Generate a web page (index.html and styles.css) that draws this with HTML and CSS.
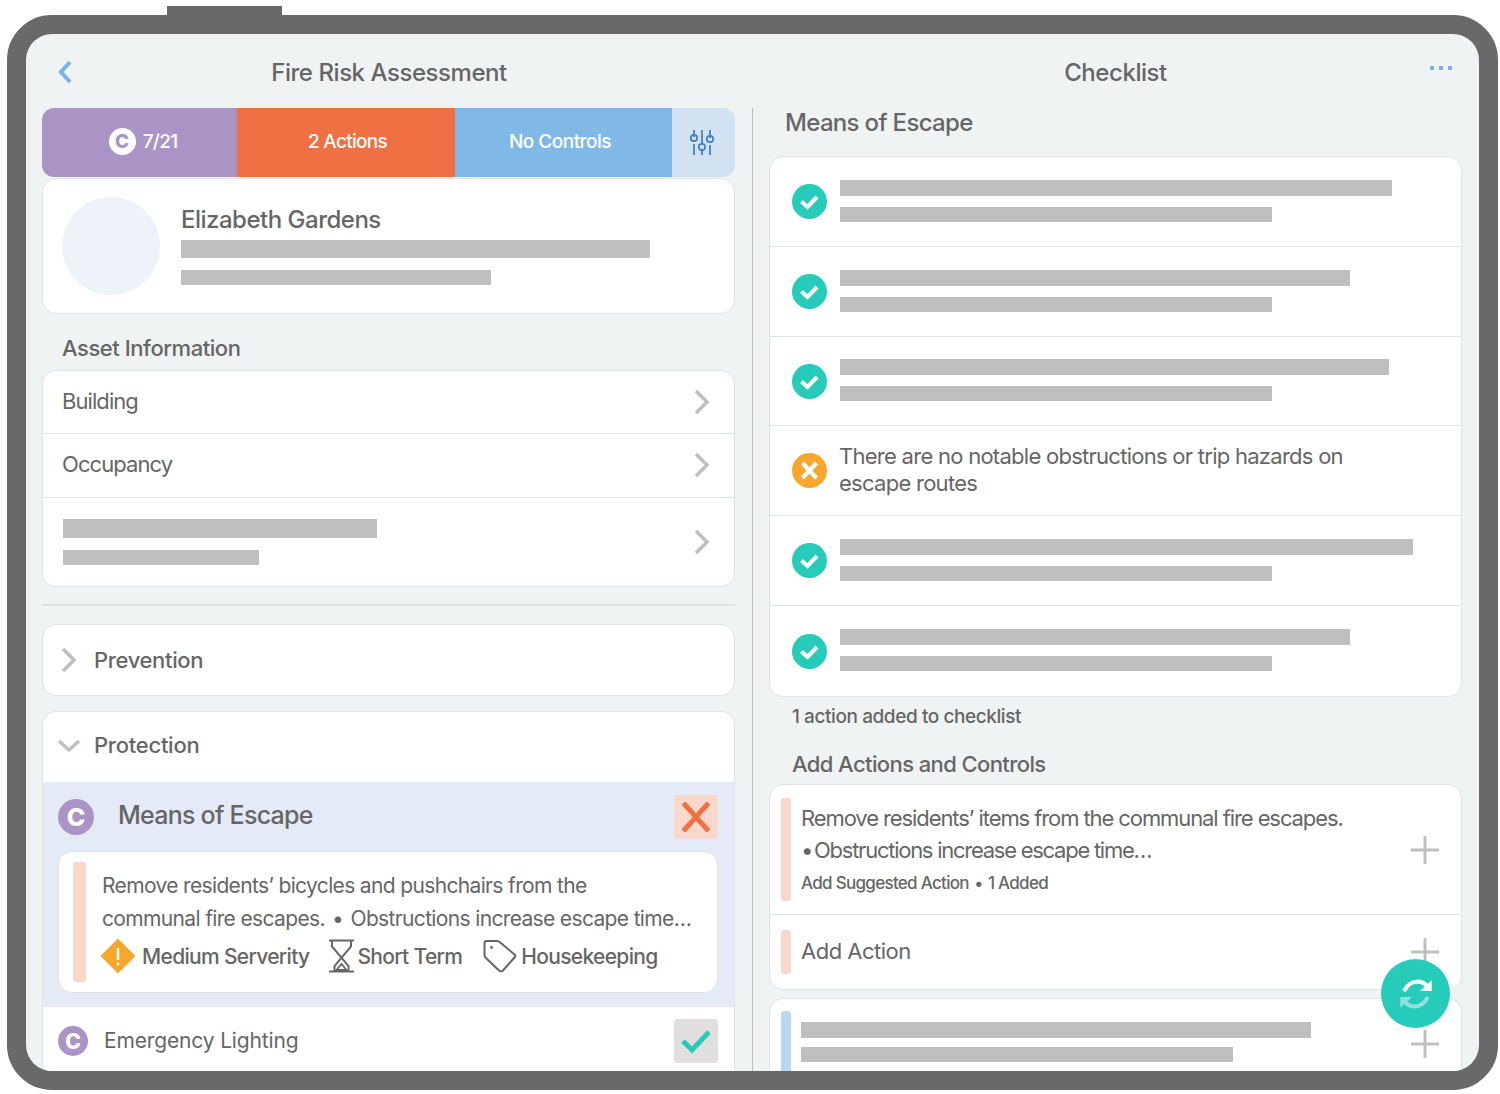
FILE: index.html
```html
<!DOCTYPE html>
<html lang="en">
<head>
<meta charset="utf-8">
<title>Fire Risk Assessment</title>
<link rel="stylesheet" href="styles.css">
</head>
<body>
<div class="device">
  <div class="screen">
    <header class="head head-left">
      <svg class="back" width="14" height="24" viewBox="0 0 14 24"><path d="M12 2 L3 12 L12 22" fill="none" stroke="#7ab4e6" stroke-width="4"/></svg>
      <h1 class="title">Fire Risk Assessment</h1>
      <span></span>
    </header>
    <header class="head head-right">
      <span></span>
      <h1 class="title">Checklist</h1>
      <div class="dots"><i></i><i></i><i></i></div>
    </header>

    <main class="col col-left">
      <div class="tabs">
        <div class="tab tab-purple"><span class="c-badge c-white">C</span>7/21</div>
        <div class="tab tab-orange">2 Actions</div>
        <div class="tab tab-blue">No Controls</div>
        <div class="tab tab-filter">
          <svg width="26" height="27" viewBox="0 0 26 27" fill="none" stroke="#3f7cc9" stroke-width="1.7">
            <path d="M5 1V8M5 15V26M13 1V14M13 21V26M21 1V9M21 16V26"/>
            <circle cx="5" cy="9" r="3.2"/><circle cx="13" cy="18" r="3.2"/><circle cx="21" cy="10" r="3.2"/>
          </svg>
        </div>
      </div>

      <section class="card profile">
        <div class="avatar"></div>
        <div class="profile-info">
          <h2 class="profile-name">Elizabeth Gardens</h2>
          <div class="bar bar-18 w-469"></div>
          <div class="bar bar-15 w-310"></div>
        </div>
      </section>

      <h3 class="label asset-label">Asset Information</h3>
      <section class="card">
        <div class="asset-row h62"><span class="row-text rt-1">Building</span><svg class="chev" width="16" height="26" viewBox="0 0 16 26"><path d="M2 2 L13 13 L2 24" fill="none" stroke="#bfbfbf" stroke-width="3.5"/></svg></div>
        <div class="asset-row h63"><span class="row-text rt-2">Occupancy</span><svg class="chev chev-up" width="16" height="26" viewBox="0 0 16 26"><path d="M2 2 L13 13 L2 24" fill="none" stroke="#bfbfbf" stroke-width="3.5"/></svg></div>
        <div class="asset-row h88 last">
          <div class="asset-bars"><div class="bar bar-19 w-314"></div><div class="bar bar-15 w-196"></div></div>
          <svg class="chev" width="16" height="26" viewBox="0 0 16 26"><path d="M2 2 L13 13 L2 24" fill="none" stroke="#bfbfbf" stroke-width="3.5"/></svg>
        </div>
      </section>

      <div class="rule"></div>

      <section class="card prevention">
        <svg class="tree-chev" width="16" height="26" viewBox="0 0 16 26"><path d="M2 2 L13 13 L2 24" fill="none" stroke="#bfbfbf" stroke-width="3.5"/></svg>
        <span class="tree-label">Prevention</span>
      </section>

      <section class="card protection">
        <div class="protection-head">
          <svg class="down-chev" width="24" height="14" viewBox="0 0 24 14"><path d="M2 2 L12 11 L22 2" fill="none" stroke="#bfbfbf" stroke-width="3.5"/></svg>
          <span class="tree-label up-2">Protection</span>
        </div>
        <div class="escape">
          <div class="escape-head">
            <span class="c-badge c-purple c-36">C</span>
            <h2 class="escape-title">Means of Escape</h2>
            <div class="sq sq-x"><svg width="30" height="30" viewBox="0 0 30 30"><path d="M2.500 1 L27.500 29 M27.500 1 L2.500 29" stroke="#ef7043" stroke-width="5" fill="none"/></svg></div>
          </div>
          <div class="card action-card">
            <div class="accent"></div>
            <div class="action-body">
              <p class="action-text">Remove residents’ bicycles and pushchairs from the<br>communal fire escapes. <span class="sep">•</span> Obstructions increase escape time…</p>
              <div class="tags">
                <svg class="ico-diamond" width="36" height="34" viewBox="0 0 36 34"><path d="M18 1 L34 17 L18 33 L2 17 Z" fill="#f7a82c" stroke="#f7a82c" stroke-width="2" stroke-linejoin="round"/><path d="M18 9V21" stroke="#fff" stroke-width="2.4"/><circle cx="18" cy="25" r="1.4" fill="#fff"/></svg>
                <span class="tag-text t-medium">Medium Serverity</span>
                <svg class="ico-glass" width="26" height="34" viewBox="0 0 26 34" fill="none" stroke="#666" stroke-width="2"><path d="M0 1.5H25M0 32.5H25M3 2V7.500L19.500 27V32M22 2V7.500L5.500 27V32"/><path d="M7.500 31L12.500 25L17.500 31Z" stroke-width="1.8"/></svg>
                <span class="tag-text t-short">Short Term</span>
                <svg class="ico-tag" width="34" height="34" viewBox="0 0 34 34" fill="none" stroke="#666" stroke-width="2"><path d="M3.5 2H14Q15.5 2 17 3.3L31.5 15.5Q33 17 31.5 18.5L20 31.5Q18 33 16 31.5L2.5 18.5Q1.5 17.500 1.500 16V4Q1.500 2 3.500 2Z"/><circle cx="8.500" cy="8.500" r="1.400" fill="#666" stroke="none"/></svg>
                <span class="tag-text">Housekeeping</span>
              </div>
            </div>
          </div>
        </div>
        <div class="lighting">
          <span class="c-badge c-purple c-30">C</span>
          <span class="lighting-text">Emergency Lighting</span>
          <div class="sq sq-check"><svg width="32" height="26" viewBox="0 0 32 26"><path d="M3 13 L12 22 L29 4" stroke="#26cbb9" stroke-width="5" fill="none"/></svg></div>
        </div>
      </section>
    </main>

    <aside class="col col-right">
      <h2 class="section-title">Means of Escape</h2>
      <section class="card">
        <div class="check-row"><svg class="status" viewBox="0 0 35 35"><circle cx="17.500" cy="17.500" r="17.500" fill="#26cbb9"/><path d="M9.500 17.500 L15.500 23 L25 13" stroke="#fff" stroke-width="4" fill="none"/></svg><div class="check-bars"><div class="bar bar-16 w-552"></div><div class="bar bar-15 w-432"></div></div></div>
        <div class="check-row"><svg class="status" viewBox="0 0 35 35"><circle cx="17.500" cy="17.500" r="17.500" fill="#26cbb9"/><path d="M9.500 17.500 L15.500 23 L25 13" stroke="#fff" stroke-width="4" fill="none"/></svg><div class="check-bars"><div class="bar bar-16 w-510"></div><div class="bar bar-15 w-432"></div></div></div>
        <div class="check-row row-89"><svg class="status" viewBox="0 0 35 35"><circle cx="17.500" cy="17.500" r="17.500" fill="#26cbb9"/><path d="M9.500 17.500 L15.500 23 L25 13" stroke="#fff" stroke-width="4" fill="none"/></svg><div class="check-bars"><div class="bar bar-16 w-549"></div><div class="bar bar-15 w-432"></div></div></div>
        <div class="check-row"><svg class="status" viewBox="0 0 35 35"><circle cx="17.500" cy="17.500" r="17.500" fill="#f7a82c"/><path d="M10.500 10 L24.500 25 M24.500 10 L10.500 25" stroke="#fff" stroke-width="4.200" fill="none"/></svg><p class="check-text">There are no notable obstructions or trip hazards on<br>escape routes</p></div>
        <div class="check-row"><svg class="status" viewBox="0 0 35 35"><circle cx="17.500" cy="17.500" r="17.500" fill="#26cbb9"/><path d="M9.500 17.500 L15.500 23 L25 13" stroke="#fff" stroke-width="4" fill="none"/></svg><div class="check-bars"><div class="bar bar-16 w-573"></div><div class="bar bar-15 w-432"></div></div></div>
        <div class="check-row last"><svg class="status" viewBox="0 0 35 35"><circle cx="17.500" cy="17.500" r="17.500" fill="#26cbb9"/><path d="M9.500 17.500 L15.500 23 L25 13" stroke="#fff" stroke-width="4" fill="none"/></svg><div class="check-bars"><div class="bar bar-16 w-510"></div><div class="bar bar-15 w-432"></div></div></div>
      </section>

      <p class="note">1 action added to checklist</p>
      <h3 class="label add-label">Add Actions and Controls</h3>

      <section class="card">
        <div class="add-row add-tall">
          <div class="accent-sm"></div>
          <div class="add-body">
            <p class="add-text">Remove residents’ items from the communal fire escapes.<br><span class="tight"><span class="bullet">•</span> Obstructions increase escape time…</span></p>
            <p class="add-small">Add Suggested Action <span class="sep-sm">•</span> 1 Added</p>
          </div>
          <svg class="plus" width="28" height="28" viewBox="0 0 28 28"><path d="M14 0V28M0 14H28" stroke="#bfbfbf" stroke-width="3"/></svg>
        </div>
        <div class="add-row add-short last">
          <div class="accent-sm accent-44"></div>
          <span class="add-action">Add Action</span>
          <svg class="plus" width="28" height="28" viewBox="0 0 28 28"><path d="M14 0V28M0 14H28" stroke="#bfbfbf" stroke-width="3"/></svg>
        </div>
      </section>

      <section class="card card-next">
        <div class="add-row next-row last">
          <div class="accent-sm accent-blue"></div>
          <div class="next-bars"><div class="bar bar-16 w-510"></div><div class="bar bar-15 w-432"></div></div>
          <svg class="plus" width="28" height="28" viewBox="0 0 28 28"><path d="M14 0V28M0 14H28" stroke="#bfbfbf" stroke-width="3"/></svg>
        </div>
      </section>
    </aside>

    <button class="fab" type="button" aria-label="Sync">
      <svg width="36" height="36" viewBox="0 0 36 36" fill="none">
        <path d="M6 15Q11 5.500 20 5.500Q26 6 30 11" stroke="#fff" stroke-width="4"/><path d="M33.700 4.300V15H22Z" fill="#fff"/>
        <path d="M30 21Q25 30.500 16 30.500Q10 30 6 25" stroke="#8de3d7" stroke-width="4"/><path d="M2.300 31.700V21H14Z" fill="#8de3d7"/>
      </svg>
    </button>
  </div>
</div>
</body>
</html>
```

FILE: styles.css
```css
* { box-sizing: border-box; }
html, body { margin: 0; padding: 0; background: #fff; }
body { font-family: Inter, "Liberation Sans", sans-serif; color: #666; }
h1, h2, h3, p { margin: 0; font-weight: 500; }

.device {
  position: relative;
  width: 1491px;
  height: 1075px;
  margin: 15px 0 0 7px;
  border: 19px solid #696969;
  border-radius: 45px;
  background: #696969;
}
.device::before {
  content: "";
  position: absolute;
  left: 141px;
  top: -28px;
  width: 115px;
  height: 9px;
  background: #696969;
}
.screen {
  position: relative;
  display: grid;
  grid-template-columns: 727px 726px;
  grid-template-rows: 74px 963px;
  height: 1037px;
  background: #eff3f4;
  border-radius: 26px;
  overflow: hidden;
}

.head {
  display: grid;
  grid-template-columns: 1fr auto 1fr;
  align-items: center;
  padding: 4px 17px 0 16px;
}
.title { font-size: 24px; line-height: 30px; letter-spacing: -0.45px; color: #666; }
.back { margin-left: 16px; margin-bottom: 2px; }
.dots { display: flex; justify-content: flex-end; gap: 5px; padding-right: 10px; margin-bottom: 10px; }
.dots i { display: block; width: 4px; height: 4px; background: #7ab4e6; }

.col { overflow: hidden; padding: 0 17px 0 16px; }
.col-left { border-right: 1px solid #bcbcbc; }

.card { background: #fff; border: 1px solid #dfe3e6; border-radius: 14px; }
.bar { background: #bfbfbf; }
.bar-15 { height: 15px; }
.bar-16 { height: 16px; }
.bar-18 { height: 18px; }
.bar-19 { height: 19px; }
.w-196 { width: 196px; }
.w-310 { width: 310px; }
.w-314 { width: 314px; }
.w-432 { width: 432px; }
.w-469 { width: 469px; }
.w-510 { width: 510px; }
.w-549 { width: 549px; }
.w-552 { width: 552px; }
.w-573 { width: 573px; }

/* tabs */
.tabs { display: flex; height: 69px; border-radius: 12px; overflow: hidden; }
.tab {
  display: flex; align-items: center; justify-content: center; gap: 7px;
  padding-bottom: 2px;
  color: #fff; font-size: 19px; font-weight: 500; letter-spacing: -0.7px;
}
.tab-purple { width: 195px; background: #a994c5; padding-left: 7px; }
.tab-orange { width: 218px; background: #ef7043; padding-left: 3px; }
.tab-blue { width: 217px; background: #80b9e6; padding-right: 7px; letter-spacing: -0.5px; }
.tab-filter { width: 63px; background: #d2e2f3; padding: 0 4px 0 0; }

.c-badge {
  display: inline-flex; align-items: center; justify-content: center;
  flex: none; width: 27px; height: 27px; border-radius: 50%;
  font-weight: 800; font-size: 19px; line-height: 1; letter-spacing: 0;
}
.c-white { background: #fff; color: #a994c5; }
.c-purple { background: #a994c5; color: #fff; }
.c-36 { width: 36px; height: 36px; font-size: 25px; }
.c-30 { width: 30px; height: 30px; font-size: 21px; }

/* profile */
.profile { display: flex; gap: 21px; height: 136px; margin-top: 1px; padding: 18px 19px; }
.avatar { flex: none; width: 98px; height: 98px; border-radius: 50%; background: #eef3fa; }
.profile-info { padding-top: 8px; }
.profile-name { font-size: 24px; line-height: 30px; letter-spacing: -0.5px; margin-bottom: 5px; }
.profile-info .bar-18 { margin-bottom: 12px; }

.label { font-size: 22px; line-height: 28px; letter-spacing: -0.45px; }
.asset-label { margin: 20px 0 8px 20px; }

.asset-row { display: flex; align-items: center; justify-content: space-between; padding: 0 24px 0 19px; border-bottom: 1px solid #dfe3e6; }
.asset-row.last { border-bottom: 0; }
.h62 { height: 63px; }
.h63 { height: 64px; }
.h88 { height: 88px; }
.row-text { font-size: 22px; letter-spacing: -0.93px; font-weight: 400; }
.rt-1 { margin-bottom: 3px; }
.rt-2 { margin-bottom: 4px; }
.chev-up { margin-bottom: 2px; }
.asset-bars { display: flex; flex-direction: column; gap: 12px; margin-left: 1px; }

.rule { height: 2px; margin: 17px 0 18px; background: #dfe3e6; }

.prevention { display: flex; align-items: center; height: 72px; padding-left: 18px; }
.tree-chev { margin-right: 17px; }
.tree-label { font-size: 22px; letter-spacing: -0.35px; font-weight: 500; }

.protection { margin-top: 15px; border-bottom: 0; border-radius: 14px 14px 0 0; overflow: hidden; }
.protection-head { display: flex; align-items: center; height: 70px; padding: 0 0 2px 14px; }
.down-chev { margin-right: 13px; }
.up-2 { margin-bottom: 2px; letter-spacing: -0.25px; }

.escape { height: 225px; padding: 13px 16px 14px 15px; background: #e4ebf7; }
.escape-head { display: flex; align-items: center; height: 44px; margin-bottom: 12px; }
.escape-title { flex: 1; margin: 0 0 4px 24px; font-size: 25px; letter-spacing: -0.75px; }
.sq { display: flex; align-items: center; justify-content: center; flex: none; width: 44px; height: 44px; border-radius: 4px; }
.sq-x { background: #f9d7cb; }
.sq-check { background: #e0dede; }

.action-card { display: flex; gap: 16px; height: 142px; padding: 10px 14px; }
.accent { flex: none; width: 13px; height: 120px; border-radius: 3px; background: #f9d7cb; }
.action-body { padding-top: 7px; min-width: 0; }
.action-text { font-size: 21px; line-height: 33px; letter-spacing: -0.65px; font-weight: 400; white-space: nowrap; }
.sep { margin: 0 2px; }
.tags { display: flex; align-items: center; height: 34px; margin: 4px 0 0 -2px; }
.tag-text { font-size: 21px; font-weight: 500; letter-spacing: -0.68px; white-space: nowrap; }
.ico-diamond { margin-right: 6px; flex: none; }
.t-medium { margin-right: 20px; }
.ico-glass { margin-right: 2px; flex: none; }
.t-short { margin-right: 21px; }
.ico-tag { margin-right: 4px; flex: none; }

.lighting { display: flex; align-items: center; height: 68px; padding: 0 16px 0 15px; }
.lighting-text { flex: 1; margin: 0 0 2px 16px; font-size: 21px; font-weight: 400; letter-spacing: -0.15px; }

/* right */
.section-title { margin: 1px 0 19px 16px; font-size: 24px; line-height: 28px; letter-spacing: -0.67px; }
.check-row { display: flex; align-items: center; gap: 13px; height: 90px; padding-left: 22px; border-bottom: 1px solid #dfe3e6; }
.check-row.row-89 { height: 89px; }
.check-row.last { border-bottom: 0; }
.status { flex: none; width: 35px; height: 35px; }
.check-bars { display: flex; flex-direction: column; gap: 11px; margin-bottom: 2px; }
.check-text { margin: 0 0 2px -1px; font-size: 22px; line-height: 27px; letter-spacing: -0.73px; font-weight: 400; white-space: nowrap; }

.note { margin: 7px 0 0 23px; font-size: 19px; line-height: 24px; letter-spacing: -0.42px; padding-top: 1px; }
.add-label { margin: 21px 0 6px 23px; letter-spacing: -0.6px; }

.add-row { display: flex; padding: 0 22px 0 11px; border-bottom: 1px solid #dfe3e6; align-items: center; }
.add-row.last { border-bottom: 0; }
.add-tall { height: 130px; }
.add-short { height: 74px; }
.accent-sm { flex: none; width: 10px; height: 103px; margin-right: 10px; border-radius: 3px; background: #f9d7cb; }
.accent-44 { height: 44px; }
.add-body { flex: 1; margin-bottom: 2px; }
.add-text { font-size: 22px; line-height: 32px; letter-spacing: -1.09px; font-weight: 400; white-space: nowrap; }
.tight { letter-spacing: -1.26px; }
.bullet { margin-right: -3px; }
.add-small { margin-top: 5px; font-size: 17px; line-height: 24px; letter-spacing: -0.7px; }
.sep-sm { margin: 0 1.5px; }
.add-action { flex: 1; margin-bottom: 2px; font-size: 22px; font-weight: 400; letter-spacing: -0.5px; }
.plus { flex: none; }

.card-next { margin-top: 8px; height: 90px; border-bottom: 0; border-radius: 14px 14px 0 0; }
.next-row { height: 90px; align-items: flex-start; padding-top: 12px; }
.accent-blue { height: 78px; background: #b7d8f1; }
.next-bars { flex: 1; display: flex; flex-direction: column; gap: 9px; padding-top: 11px; }
.next-row .plus { margin-top: 19px; }

.fab {
  position: absolute; left: 1355px; top: 925px;
  display: flex; align-items: center; justify-content: center;
  width: 69px; height: 69px; padding: 0; border: 0; border-radius: 50%;
  background: #26cbb9;
}
```
